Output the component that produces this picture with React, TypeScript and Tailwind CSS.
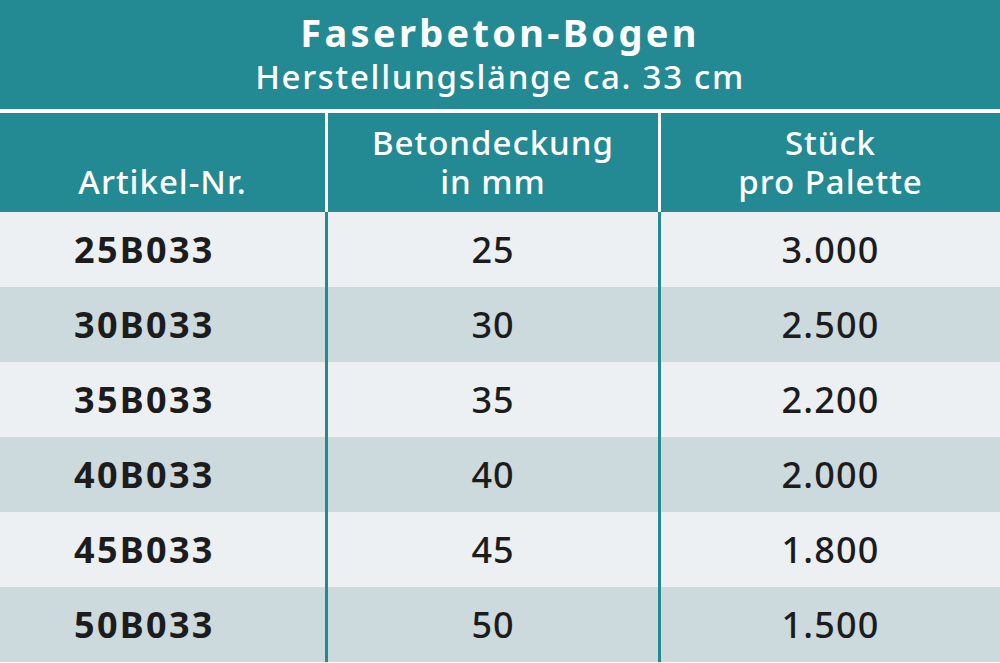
const rows = [
  { nr: "25B033", mm: "25", st: "3.000" },
  { nr: "30B033", mm: "30", st: "2.500" },
  { nr: "35B033", mm: "35", st: "2.200" },
  { nr: "40B033", mm: "40", st: "2.000" },
  { nr: "45B033", mm: "45", st: "1.800" },
  { nr: "50B033", mm: "50", st: "1.500" },
];

export default function App() {
  return (
    <div className="w-[1000px] h-[663px] overflow-hidden bg-white font-['Noto_Sans',sans-serif]">
      {/* Title */}
      <div className="h-[109px] bg-[#238a93] text-white flex flex-col items-center pt-[9px]">
        <h1 className="text-[38px] font-bold leading-[46px] tracking-[3.3px]">Faserbeton-Bogen</h1>
        <p className="mt-[2px] text-[33px] font-medium leading-[40px] tracking-[1.7px]">Herstellungslänge ca. 33 cm</p>
      </div>

      {/* Header */}
      <div className="mt-[4px] h-[99px] grid grid-cols-[325px_330px_1fr] gap-x-[3px] bg-white text-white text-[33px] font-medium leading-[39px] tracking-[1px] text-center">
        <div className="bg-[#238a93] flex items-end justify-center pb-[11px]">Artikel-Nr.</div>
        <div className="bg-[#238a93] flex items-end justify-center pb-[11px]">
          <span>Betondeckung<br />in mm</span>
        </div>
        <div className="bg-[#238a93] flex items-end justify-center pb-[11px]">
          <span>Stück<br />pro Palette</span>
        </div>
      </div>

      {/* Body */}
      {rows.map((r, i) => (
        <div
          key={r.nr}
          className="h-[75px] grid grid-cols-[325px_330px_1fr] gap-x-[3px] bg-[#238a93] text-[#1c1c1c] text-[36px] font-medium tracking-[0.8px]"
        >
          <div className={`${i % 2 === 0 ? "bg-[#ecf0f3]" : "bg-[#ccdade]"} flex items-center pl-[74px] font-bold tracking-[2.3px]`}>
            {r.nr}
          </div>
          <div className={`${i % 2 === 0 ? "bg-[#ecf0f3]" : "bg-[#ccdade]"} flex items-center justify-center`}>
            {r.mm}
          </div>
          <div className={`${i % 2 === 0 ? "bg-[#ecf0f3]" : "bg-[#ccdade]"} flex items-center justify-center tracking-[1.2px]`}>
            {r.st}
          </div>
        </div>
      ))}
    </div>
  );
}
